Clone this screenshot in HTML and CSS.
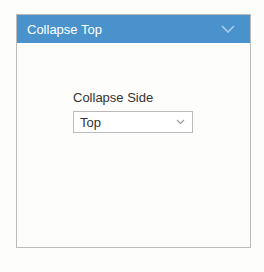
FILE: index.html
```html
<!DOCTYPE html>
<html lang="en">
<head>
    <meta charset="UTF-8">
    <title>Collapse Top</title>
    <link rel="stylesheet" href="styles.css">
</head>
<body>
    <div class="panel">
        <div class="panel-header">
            <span class="panel-title">Collapse Top</span>
            <svg class="panel-tool" width="14" height="8" viewBox="0 0 14 8">
                <polyline points="1,1 7,7 13,1" fill="none" stroke="#a8cdec" stroke-width="1.6"/>
            </svg>
        </div>
        <div class="panel-body">
            <div class="field">
                <label class="field-label">Collapse Side</label>
                <div class="select">
                    <span class="select-value">Top</span>
                    <svg class="select-arrow" width="9" height="6" viewBox="0 0 9 6">
                        <polyline points="1,1 4.5,4.5 8,1" fill="none" stroke="#999" stroke-width="1.1"/>
                    </svg>
                </div>
            </div>
        </div>
    </div>
</body>
</html>
```

FILE: styles.css
```css
* {
    margin: 0;
    padding: 0;
    box-sizing: border-box;
}

body {
    background-color: #fdfdfb;
    font-family: 'Liberation Sans', Arial, sans-serif;
    color: #333;
    padding: 14px 0 0 16px;
}

.panel {
    width: 235px;
    height: 234px;
    border: 1px solid #bbb;
    display: flex;
    flex-direction: column;
}

.panel-header {
    background-color: #4a92cc;
    height: 28px;
    display: flex;
    align-items: center;
    justify-content: space-between;
    padding: 0 15px 0 10px;
}

.panel-title {
    color: #fff;
    font-size: 13px;
}

.panel-body {
    flex: 1;
    padding: 47px 0 0 56px;
}

.field-label {
    display: block;
    font-size: 13px;
    line-height: 16px;
    color: #333;
    margin-bottom: 5px;
}

.select {
    width: 120px;
    height: 22px;
    border: 1px solid #bbb;
    background-color: #fff;
    display: flex;
    align-items: center;
    justify-content: space-between;
    padding: 0 7px 0 6px;
}

.select-value {
    font-size: 13px;
    color: #333;
}
```
